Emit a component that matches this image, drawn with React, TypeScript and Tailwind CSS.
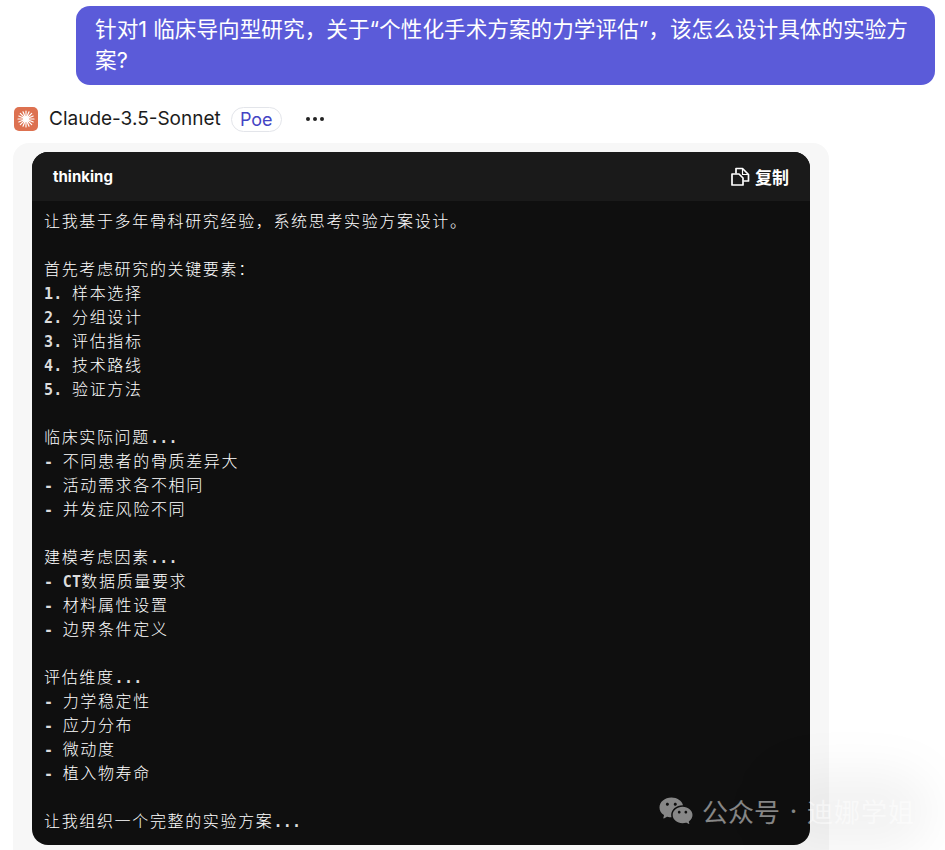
import React from 'react';
import { RiWechatFill } from 'react-icons/ri';

const CJK = '"Noto Sans CJK SC", sans-serif';

const LINES = [
  '让我基于多年骨科研究经验，系统思考实验方案设计。',
  '',
  '首先考虑研究的关键要素：',
  '1. 样本选择',
  '2. 分组设计',
  '3. 评估指标',
  '4. 技术路线',
  '5. 验证方法',
  '',
  '临床实际问题...',
  '- 不同患者的骨质差异大',
  '- 活动需求各不相同',
  '- 并发症风险不同',
  '',
  '建模考虑因素...',
  '- CT数据质量要求',
  '- 材料属性设置',
  '- 边界条件定义',
  '',
  '评估维度...',
  '- 力学稳定性',
  '- 应力分布',
  '- 微动度',
  '- 植入物寿命',
  '',
  '让我组织一个完整的实验方案...',
];

// latin runs sit on a narrower grid than the CJK glyphs
const CodeLine: React.FC<{ text: string }> = ({ text }) => (
  <div className="h-6 whitespace-pre leading-6">
    {text.split(/([A-Za-z0-9.\- ]+)/).map((part, idx) =>
      /^[A-Za-z0-9.\- ]+$/.test(part) ? (
        <span key={idx} className="font-['DejaVu_Sans_Mono',monospace] text-[15px] font-bold tracking-[0.3px] text-[#dcdcdc]">
          {part}
        </span>
      ) : (
        <span key={idx} className="font-['Noto_Sans_CJK_SC',sans-serif] text-[16px] font-light tracking-[1.65px]">
          {part}
        </span>
      )
    )}
  </div>
);

const ClaudeLogo = () => (
  <svg width="24" height="24" viewBox="0 0 24 24">
    <rect width="24" height="24" rx="5" fill="#dd7150" />
    <g stroke="#fff" strokeLinecap="round" strokeWidth="1.2">
      <path d="M12 12V4" />
      <path d="M12 12V20" />
      <path d="M12 12H4" />
      <path d="M12 12H20" />
      <path d="M12 12L6.3 6.3" />
      <path d="M12 12L17.7 6.3" />
      <path d="M12 12L6.3 17.7" />
      <path d="M12 12L17.7 17.7" />
      <path d="M12 12L9 4.8" />
      <path d="M12 12L15 4.8" />
      <path d="M12 12L4.8 9" />
      <path d="M12 12L19.2 9" />
      <path d="M12 12L4.8 15" />
      <path d="M12 12L19.2 15" />
      <path d="M12 12L9 19.2" />
      <path d="M12 12L15 19.2" />
    </g>
    <circle cx="12" cy="12" r="3" fill="#fff" />
  </svg>
);

const CopyIcon = () => (
  <svg width="19" height="19" viewBox="0 0 19 19" fill="none" stroke="#fff" strokeWidth="1.7" strokeLinejoin="round">
    <path d="M1 7H8L12 11V18H1V7Z" />
    <path d="M5 6.5V1.5H11.5L17.5 7.5V14H12.5" />
    <path d="M11.5 2V7.5H17" strokeWidth="1.2" />
  </svg>
);

export default function App() {
  return (
    <div className="relative h-[850px] w-[945px] overflow-hidden bg-white" style={{ fontFamily: CJK }}>
      {/* Question bubble */}
      <div className="pt-[6px] pr-[10px] pl-[76px]">
        <div className="h-[79px] rounded-[14px] bg-[#5b5bd9] px-[19px] pt-[8px] font-['Inter','Noto_Sans_CJK_SC',sans-serif] text-[21.65px] leading-[31px] text-white">
          针对1 临床导向型研究，关于“个性化手术方案的力学评估”，该怎么设计具体的实验方案?
        </div>
      </div>

      {/* Bot header */}
      <div className="mt-[21px] flex h-[26px] items-center pl-[14px]">
        <ClaudeLogo />
        <span className="ml-[11px] font-['Inter',sans-serif] text-[19px] text-[#1c1c1c]">Claude-3.5-Sonnet</span>
        <span className="ml-[10px] flex h-[25px] w-[51px] items-center justify-center rounded-full border border-[#e3e5ea] font-['Inter',sans-serif] text-[18px] text-[#4444c4]">
          Poe
        </span>
        <div className="ml-[24px] flex gap-[3px]">
          <span className="h-1 w-1 rounded-full bg-[#222]" />
          <span className="h-1 w-1 rounded-full bg-[#222]" />
          <span className="h-1 w-1 rounded-full bg-[#222]" />
        </div>
      </div>

      {/* Message card */}
      <div className="mt-[11px] ml-[13px] h-[720px] w-[816px] rounded-t-[16px] bg-[#f7f7f7] pt-[9px] pl-[19px]">
        <div className="h-[693px] w-[778px] overflow-hidden rounded-[16px] bg-[#0f0f0f]">
          <div className="flex h-[49px] items-center justify-between bg-[#1a1a1a] pr-[21px] pl-[21px]">
            <span className="pt-[2px] font-['Inter',sans-serif] text-[15px] font-bold text-white">thinking</span>
            <span className="flex items-center gap-[5px] text-[17px] font-bold text-white">
              <CopyIcon />
              复制
            </span>
          </div>
          <div className="px-3 pt-[7px] text-white">
            {LINES.map((line, idx) => (
              <CodeLine key={idx} text={line} />
            ))}
          </div>
        </div>
      </div>

      {/* Watermark */}
      <div className="absolute top-[772px] left-[770px] h-[78px] w-[160px] rounded-full bg-black/5 blur-xl" />
      <div className="absolute top-[793px] left-[658px] flex items-center text-[26px] leading-[32px] text-white/50">
        <RiWechatFill size={36} className="mr-[8px]" />
        <span>公众号</span>
        <span className="w-[27px] text-center font-['Inter',sans-serif]">·</span>
        <span className="tracking-[1px]">迪娜学姐</span>
      </div>
    </div>
  );
}
